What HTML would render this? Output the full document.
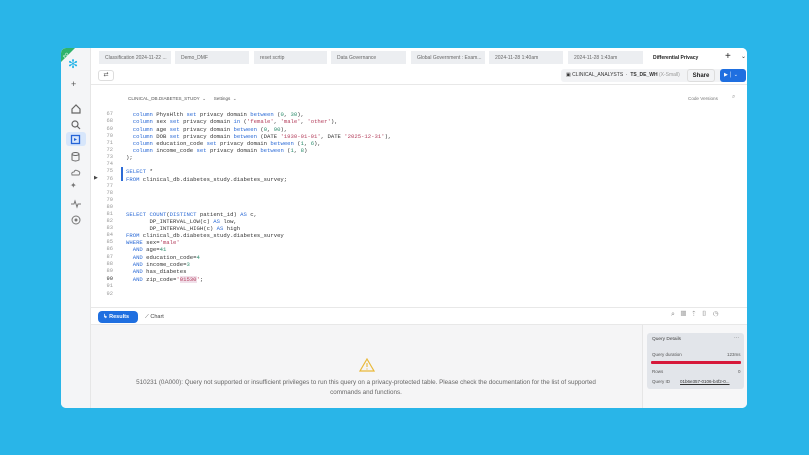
<!DOCTYPE html>
<html><head><meta charset="utf-8"><style>
*{margin:0;padding:0;box-sizing:border-box}
body{width:809px;height:455px;background:#29b5e8;font-family:"Liberation Sans",sans-serif;position:relative;overflow:hidden}
.card{position:absolute;left:61px;top:48px;width:686px;height:360px;background:#fff;border-radius:5px;overflow:hidden}
.side{position:absolute;left:0;top:0;width:30px;height:360px;background:#f4f5f7;border-right:1px solid #e6e6e6}
.tabs{position:absolute;left:30px;top:0;right:0;height:18px;background:#fff}
.tab{position:absolute;top:3px;height:13px;background:#eceef1;font-size:5px;color:#666;padding:4px 6px;white-space:nowrap;overflow:hidden}
.a{position:absolute;white-space:pre}
.ln{position:absolute;left:42px;font:5.4px "Liberation Mono",monospace;color:#999;width:10px;text-align:right}
.cd{position:absolute;left:65px;font:5.6px "Liberation Mono",monospace;color:#333;white-space:pre}
.k{color:#2c6bd6}.s{color:#b33c5a}.n{color:#2a8a6a}
.ic{position:absolute;left:9px;width:11px;height:11px;border:1.2px solid #777;border-radius:3px}
</style></head><body>
<div class="card">
 <div class="side">
  <svg style="position:absolute;left:0;top:0" width="22" height="22"><polygon points="0,0 14,0 0,14" fill="#2fb36b"/><text x="1" y="8" font-size="4" fill="#fff" transform="rotate(-45 5 6)">PO</text></svg>
  <div class="a" style="left:7px;top:9px;font-size:12px;color:#29b5e8">✻</div>
  <div class="a" style="left:10px;top:31px;font-size:9px;color:#555">+</div>
  <svg class="a" style="left:9px;top:55px" width="12" height="12"><path d="M2 6L6 2L10 6V10H2Z" fill="none" stroke="#666" stroke-width="1.2"/></svg>
  <svg class="a" style="left:9px;top:71px" width="12" height="12"><circle cx="5" cy="5" r="3" fill="none" stroke="#666" stroke-width="1.2"/><path d="M7 7L10 10" stroke="#666" stroke-width="1.2"/></svg>
  <div class="a" style="left:5px;top:84px;width:20px;height:14px;background:#d7e6fb;border-radius:3px"></div>
  <svg class="a" style="left:9px;top:86px" width="12" height="12"><rect x="1.5" y="1.5" width="8" height="8" fill="none" stroke="#2463d6" stroke-width="1.3"/><path d="M4 4L7 5.5L4 7Z" fill="#2463d6"/></svg>
  <svg class="a" style="left:9px;top:103px" width="12" height="12"><ellipse cx="5.5" cy="3" rx="3.5" ry="1.5" fill="none" stroke="#666"/><path d="M2 3V9Q5.5 11 9 9V3" fill="none" stroke="#666"/></svg>
  <svg class="a" style="left:9px;top:119px" width="12" height="12"><path d="M2 8Q1 5 4 5Q5 2 8 4Q11 5 9 8Z" fill="none" stroke="#777"/></svg>
  <div class="a" style="left:9px;top:133px;font-size:8px;color:#777">✦</div>
  <svg class="a" style="left:9px;top:150px" width="12" height="12"><path d="M1 6H4L5 3L7 9L8 6H11" fill="none" stroke="#777"/></svg>
  <svg class="a" style="left:9px;top:166px" width="12" height="12"><circle cx="6" cy="6" r="4" fill="none" stroke="#777"/><circle cx="6" cy="6" r="1.5" fill="#777"/></svg>
 </div>
 <div class="tabs">
  <div class="tab" style="left:8px;width:72px">Classification 2024-11-22 ...</div>
  <div class="tab" style="left:84px;width:74px">Demo_DMF</div>
  <div class="tab" style="left:163px;width:73px">reset scrtip</div>
  <div class="tab" style="left:240px;width:75px">Data Governance</div>
  <div class="tab" style="left:320px;width:74px">Global Government : Exam...</div>
  <div class="tab" style="left:398px;width:74px">2024-11-28 1:40am</div>
  <div class="tab" style="left:477px;width:75px">2024-11-28 1:43am</div>
  <div class="tab" style="left:556px;width:74px;background:#fff;color:#222;font-weight:bold">Differential Privacy</div>
  <div class="a" style="left:634px;top:3px;font-size:10px;color:#222">+</div>
  <div class="a" style="left:650px;top:5px;font-size:6px;color:#333">⌄</div>
 </div>
 <div class="a" style="left:30px;top:18px;right:0;height:19px;border-bottom:1px solid #e8e8e8;background:#fff"></div>
 <div class="a" style="left:37px;top:22px;width:16px;height:11px;border:1px solid #ddd;border-radius:3px;font-size:6px;color:#555;text-align:center">⇄</div>
 <div class="a" style="left:500px;top:21px;width:176px;height:13px;background:#f2f3f5;border-radius:3px"></div>
 <div class="a" style="left:505px;top:24px;font-size:5px;color:#333">▣ CLINICAL_ANALYSTS  ·  <b>TS_DE_WH</b> <span style="color:#999">(X-Small)</span></div>
 <div class="a" style="left:626px;top:21px;width:28px;height:13px;border:1px solid #ddd;border-radius:3px;font-size:6px;font-weight:bold;color:#222;text-align:center;padding-top:3px">Share</div>
 <div class="a" style="left:659px;top:21px;width:26px;height:13px;background:#1f6fe0;border-radius:3px;color:#fff;font-size:5px;padding:3px 4px">▶ │ ⌄</div>
 <div class="a" style="left:67px;top:48px;font-size:4.6px;color:#555">CLINICAL_DB.DIABETES_STUDY  ⌄      Settings  ⌄</div>
 <div class="a" style="left:627px;top:48px;font-size:4.6px;color:#777">Code Versions</div>
 <div class="a" style="left:671px;top:46px;font-size:6px;color:#999">⌕</div>

 <div class="ln" style="top:63px">67</div><div class="cd" style="top:63px">  <span class="k">column</span> PhysHlth <span class="k">set</span> privacy domain <span class="k">between</span> (<span class="n">0</span>, <span class="n">30</span>),</div>
 <div class="ln" style="top:70px">68</div><div class="cd" style="top:70px">  <span class="k">column</span> sex <span class="k">set</span> privacy domain <span class="k">in</span> (<span class="s">'female'</span>, <span class="s">'male'</span>, <span class="s">'other'</span>),</div>
 <div class="ln" style="top:78px">69</div><div class="cd" style="top:78px">  <span class="k">column</span> age <span class="k">set</span> privacy domain <span class="k">between</span> (<span class="n">0</span>, <span class="n">90</span>),</div>
 <div class="ln" style="top:85px">70</div><div class="cd" style="top:85px">  <span class="k">column</span> DOB <span class="k">set</span> privacy domain <span class="k">between</span> (DATE <span class="s">'1930-01-01'</span>, DATE <span class="s">'2025-12-31'</span>),</div>
 <div class="ln" style="top:92px">71</div><div class="cd" style="top:92px">  <span class="k">column</span> education_code <span class="k">set</span> privacy domain <span class="k">between</span> (<span class="n">1</span>, <span class="n">6</span>),</div>
 <div class="ln" style="top:99px">72</div><div class="cd" style="top:99px">  <span class="k">column</span> income_code <span class="k">set</span> privacy domain <span class="k">between</span> (<span class="n">1</span>, <span class="n">8</span>)</div>
 <div class="ln" style="top:106px">73</div><div class="cd" style="top:106px">);</div>
 <div class="ln" style="top:113px">74</div>
 <div class="a" style="left:60px;top:119px;width:1.5px;height:14px;background:#2c6bd6"></div>
 <div class="ln" style="top:120px">75</div><div class="cd" style="top:120px"><span class="k">SELECT</span> *</div>
 <div class="a" style="left:33px;top:127px;font-size:5px;color:#444">▶</div>
 <div class="ln" style="top:128px">76</div><div class="cd" style="top:128px"><span class="k">FROM</span> clinical_db.diabetes_study.diabetes_survey;</div>
 <div class="ln" style="top:135px">77</div>
 <div class="ln" style="top:142px">78</div>
 <div class="ln" style="top:149px">79</div>
 <div class="ln" style="top:156px">80</div>
 <div class="ln" style="top:163px">81</div><div class="cd" style="top:163px"><span class="k">SELECT</span> <span class="k">COUNT</span>(<span class="k">DISTINCT</span> patient_id) <span class="k">AS</span> c,</div>
 <div class="ln" style="top:170px">82</div><div class="cd" style="top:170px">       DP_INTERVAL_LOW(c) <span class="k">AS</span> low,</div>
 <div class="ln" style="top:177px">83</div><div class="cd" style="top:177px">       DP_INTERVAL_HIGH(c) <span class="k">AS</span> high</div>
 <div class="ln" style="top:184px">84</div><div class="cd" style="top:184px"><span class="k">FROM</span> clinical_db.diabetes_study.diabetes_survey</div>
 <div class="ln" style="top:191px">85</div><div class="cd" style="top:191px"><span class="k">WHERE</span> sex=<span class="s">'male'</span></div>
 <div class="ln" style="top:198px">86</div><div class="cd" style="top:198px">  <span class="k">AND</span> age=<span class="n">41</span></div>
 <div class="ln" style="top:206px">87</div><div class="cd" style="top:206px">  <span class="k">AND</span> education_code=<span class="n">4</span></div>
 <div class="ln" style="top:213px">88</div><div class="cd" style="top:213px">  <span class="k">AND</span> income_code=<span class="n">3</span></div>
 <div class="ln" style="top:220px">89</div><div class="cd" style="top:220px">  <span class="k">AND</span> has_diabetes</div>
 <div class="ln" style="top:228px;color:#333">90</div><div class="cd" style="top:228px">  <span class="k">AND</span> zip_code=<span class="s">'<span style="background:#f1e0ea">01530</span>'</span>;</div>
 <div class="ln" style="top:235px">91</div>
 <div class="ln" style="top:243px">92</div>

 <div class="a" style="left:30px;top:259px;right:0;height:18px;border-top:1px solid #e8e8e8;border-bottom:1px solid #e8e8e8;background:#fff"></div>
 <div class="a" style="left:37px;top:263px;width:40px;height:12px;background:#1f6fe0;border-radius:4px;color:#fff;font-size:5.5px;font-weight:bold;padding:3px 5px">↳ Results</div>
 <div class="a" style="left:84px;top:266px;font-size:5.5px;color:#444">⟋ Chart</div>
 <div class="a" style="left:610px;top:263px;font-size:7px;color:#888;letter-spacing:6px">⌕▥⇡▯◷</div>
 <div class="a" style="left:30px;top:277px;width:551px;height:83px;background:#f5f5f6"></div>
 <div class="a" style="left:581px;top:277px;width:105px;height:83px;background:#f7f7f8;border-left:1px solid #e6e6e6"></div>
 <svg class="a" style="left:298px;top:310px" width="16" height="14"><path d="M8 1L15 13H1Z" fill="none" stroke="#e9b93a" stroke-width="1.2"/><path d="M8 5V9M8 10.5V11.5" stroke="#e9b93a" stroke-width="1.1"/></svg>
 <div class="a" style="left:60px;top:330px;width:490px;font-size:6.3px;color:#666;text-align:center;white-space:normal;line-height:10px">510231 (0A000): Query not supported or insufficient privileges to run this query on a privacy-protected table. Please check the documentation for the list of supported commands and functions.</div>
 <div class="a" style="left:586px;top:285px;width:97px;height:56px;background:#e2e5ea;border-radius:3px"></div>
 <div class="a" style="left:591px;top:289px;font-size:4.8px;color:#444">Query Details</div>
 <div class="a" style="left:673px;top:287px;font-size:5px;color:#666">···</div>
 <div class="a" style="left:591px;top:304px;font-size:4.5px;color:#555">Query duration</div>
 <div class="a" style="left:666px;top:304px;font-size:4.5px;color:#555">123ms</div>
 <div class="a" style="left:590px;top:313px;width:90px;height:3px;background:#d6183a;border-radius:1px"></div>
 <div class="a" style="left:591px;top:321px;font-size:4.5px;color:#555">Rows</div>
 <div class="a" style="left:677px;top:321px;font-size:4.5px;color:#555">0</div>
 <div class="a" style="left:591px;top:331px;font-size:4.5px;color:#555">Query ID</div>
 <div class="a" style="left:619px;top:331px;font-size:4.5px;color:#333;text-decoration:underline">01b6e357-0106-b4f2-0...</div>
</div>
</body></html>
